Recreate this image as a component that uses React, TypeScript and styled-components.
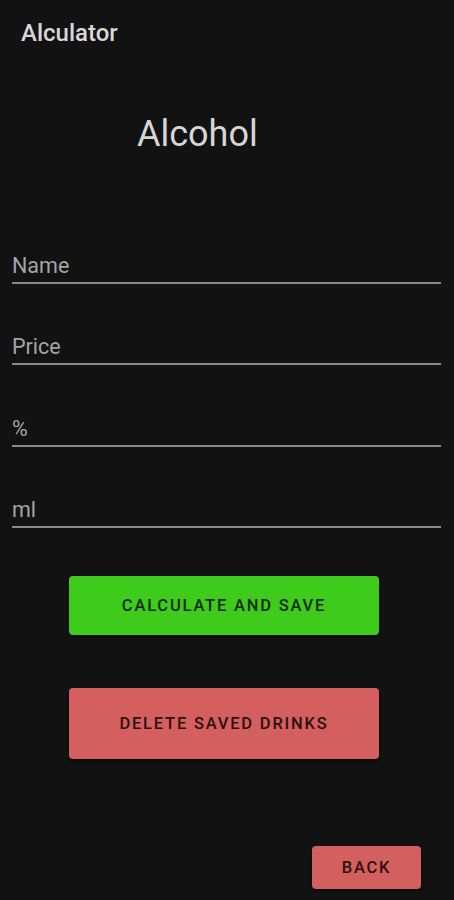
import React from "react";
import styled, { createGlobalStyle } from "styled-components";

const Global = createGlobalStyle`
  html, body {
    margin: 0;
    padding: 0;
    background: #121212;
  }
  body {
    font-family: Roboto, "Noto Sans", sans-serif;
  }
`;

const Screen = styled.div`
  width: 454px;
  height: 900px;
  background: #121212;
  display: flex;
  flex-direction: column;
  box-sizing: border-box;
  overflow: hidden;
`;

const AppBar = styled.div`
  height: 64px;
  padding: 18px 0 0 21px;
  box-sizing: border-box;
  font-size: 24px;
  font-weight: 500;
  color: #d8d8d8;
  line-height: 30px;
`;

const Heading = styled.h1`
  margin: 48px 0 0 137px;
  font-size: 36px;
  font-weight: 400;
  color: #d6d6d6;
  line-height: 44px;
`;

const Form = styled.div`
  display: flex;
  flex-direction: column;
  margin-top: 73px;
  padding: 0 13px 0 12px;
  width: 454px;
  box-sizing: border-box;
`;

const Field = styled.div`
  height: 81.3px;
  display: flex;
  flex-direction: column;
  justify-content: flex-end;
  &:first-child {
    height: 55px;
  }
`;

const Label = styled.div`
  font-size: 21.5px;
  color: #a4a4a4;
  line-height: 26px;
  padding-bottom: 3px;
`;

const Underline = styled.div`
  height: 2px;
  background: #8a8a8a;
`;

const ButtonColumn = styled.div`
  display: flex;
  flex-direction: column;
  align-items: flex-start;
  padding-left: 69px;
  margin-top: 48px;
  gap: 53px;
`;

const ActionButton = styled.button<{ $bg: string; $fg: string; $h: number }>`
  width: 310px;
  height: ${(p) => p.$h}px;
  border: none;
  border-radius: 4px;
  background: ${(p) => p.$bg};
  color: ${(p) => p.$fg};
  font-family: Roboto, "Noto Sans", sans-serif;
  font-size: 16.5px;
  font-weight: 500;
  letter-spacing: 1.8px;
  text-transform: uppercase;
  box-shadow: 0 2px 3px rgba(0, 0, 0, 0.5);
`;

const Footer = styled.div`
  margin-top: auto;
  display: flex;
  justify-content: flex-end;
  padding: 0 33px 11px 0;
`;

const BackButton = styled(ActionButton)`
  width: 109px;
`;

export default function App() {
  const fields = ["Name", "Price", "%", "ml"];
  return (
    <Screen>
      <Global />
      <AppBar>Alculator</AppBar>
      <Heading>Alcohol</Heading>
      <Form>
        {fields.map((f) => (
          <Field key={f}>
            <Label>{f}</Label>
            <Underline />
          </Field>
        ))}
      </Form>
      <ButtonColumn>
        <ActionButton $bg="#3ecb1c" $fg="#122a09" $h={59}>
          Calculate and save
        </ActionButton>
        <ActionButton $bg="#d45f5f" $fg="#2e0f0f" $h={71}>
          Delete saved drinks
        </ActionButton>
      </ButtonColumn>
      <Footer>
        <BackButton $bg="#d45f5f" $fg="#2e0f0f" $h={43}>
          Back
        </BackButton>
      </Footer>
    </Screen>
  );
}
